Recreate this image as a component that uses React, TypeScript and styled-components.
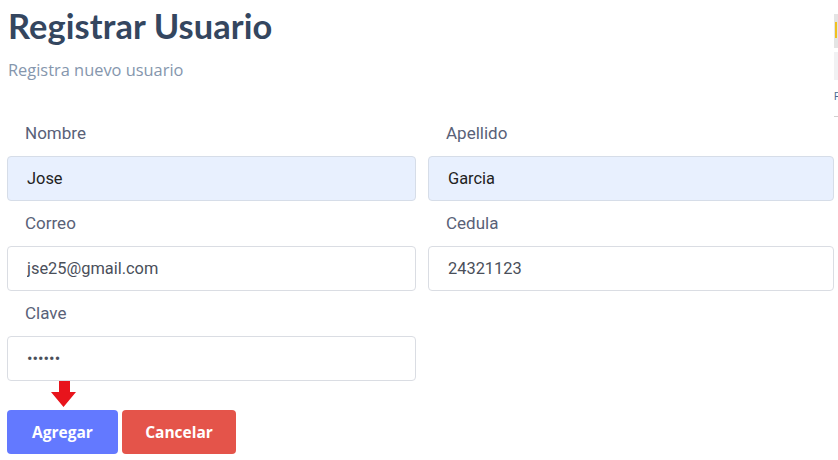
import React from "react";
import styled, { createGlobalStyle } from "styled-components";

const Global = createGlobalStyle`
  html, body { margin: 0; padding: 0; background: #ffffff; }
  body { width: 838px; height: 460px; overflow: hidden; position: relative; }
`;

const Page = styled.div`
  padding: 4px 0 0 7px;
  width: 827px;
  font-family: Roboto, "Liberation Sans", sans-serif;
`;

const Title = styled.h1`
  margin: 0 0 0 1px;
  font-family: Lato, "Open Sans", sans-serif;
  font-weight: 700;
  font-size: 34.4px;
  line-height: 44px;
  color: #34465f;
  letter-spacing: 0.1px;
`;

const Subtitle = styled.p`
  margin: 11px 0 0 1px;
  font-family: "Open Sans", sans-serif;
  font-size: 16.4px;
  line-height: 22px;
  color: #8596ad;
`;

const Form = styled.form`
  margin-top: 41px;
  display: grid;
  grid-template-columns: 409px 406px;
  column-gap: 12px;
  row-gap: 0;
`;

const Field = styled.div`
  display: flex;
  flex-direction: column;
`;

const Label = styled.label`
  font-size: 17px;
  line-height: 22px;
  color: #596178;
  padding: 0 0 12px 18px;
`;

const Input = styled.input<{ $filled?: boolean }>`
  box-sizing: border-box;
  height: 45px;
  width: 100%;
  border: 1px solid ${(p) => (p.$filled ? "#d6dde8" : "#dadde3")};
  border-radius: 4px;
  background: ${(p) => (p.$filled ? "#e8f0fe" : "#ffffff")};
  font-family: Roboto, "Liberation Sans", sans-serif;
  font-size: 16.4px;
  color: ${(p) => (p.$filled ? "#222222" : "#4a4f5a")};
  padding: 0 19px;
  margin-bottom: 11px;
  outline: none;
`;

const Actions = styled.div`
  margin-top: 18px;
  display: flex;
  gap: 4px;
  position: relative;
`;

const Button = styled.button<{ $variant: "primary" | "danger" }>`
  height: 44px;
  padding: 0;
  width: ${(p) => (p.$variant === "primary" ? "111px" : "114px")};
  border: none;
  border-radius: 4px;
  background: ${(p) => (p.$variant === "primary" ? "#6379ff" : "#e4544a")};
  color: #ffffff;
  font-family: "Open Sans", sans-serif;
  font-weight: 700;
  font-size: 15.5px;
`;

const Arrow = styled.svg`
  position: absolute;
  left: 44px;
  top: -29px;
`;

const EdgePanel = styled.div`
  position: absolute;
  left: 834px;
  top: 14px;
  width: 4px;
  display: flex;
  flex-direction: column;
  gap: 4px;
`;

const EdgeCard = styled.div<{ $accent?: boolean }>`
  height: ${(p) => (p.$accent ? "34px" : "28px")};
  background: ${(p) => (p.$accent ? "#e4e4e4" : "#f1f1f3")};
  position: relative;
  &::after {
    content: "";
    display: ${(p) => (p.$accent ? "block" : "none")};
    position: absolute;
    left: 1px;
    top: 8px;
    width: 2px;
    height: 16px;
    background: #f0c020;
  }
`;

const EdgeText = styled.span`
  font-family: "Liberation Sans", sans-serif;
  font-size: 10px;
  color: #4a6a90;
  margin-top: 8px;
  line-height: 10px;
  width: 4px;
  overflow: hidden;
`;

const EdgeLine = styled.div`
  margin-top: 10px;
  height: 1px;
  background: #d0d0d0;
`;

export default function App() {
  return (
    <>
      <Global />
      <Page>
        <Title>Registrar Usuario</Title>
        <Subtitle>Registra nuevo usuario</Subtitle>
        <Form onSubmit={(e) => e.preventDefault()}>
          <Field>
            <Label>Nombre</Label>
            <Input $filled defaultValue="Jose" />
          </Field>
          <Field>
            <Label>Apellido</Label>
            <Input $filled defaultValue="Garcia" />
          </Field>
          <Field>
            <Label>Correo</Label>
            <Input defaultValue="jse25@gmail.com" />
          </Field>
          <Field>
            <Label>Cedula</Label>
            <Input defaultValue="24321123" />
          </Field>
          <Field>
            <Label>Clave</Label>
            <Input type="password" defaultValue="123456" />
          </Field>
        </Form>
        <Actions>
          <Arrow width="25" height="26" viewBox="0 0 25 26">
            <path d="M8 0 H19 V11 H25 L12.5 26 L0 11 H8 Z" fill="#e8141c" />
          </Arrow>
          <Button $variant="primary">Agregar</Button>
          <Button $variant="danger">Cancelar</Button>
        </Actions>
      </Page>
      <EdgePanel>
        <EdgeCard $accent />
        <EdgeCard />
        <EdgeText>F.</EdgeText>
        <EdgeLine />
      </EdgePanel>
    </>
  );
}
